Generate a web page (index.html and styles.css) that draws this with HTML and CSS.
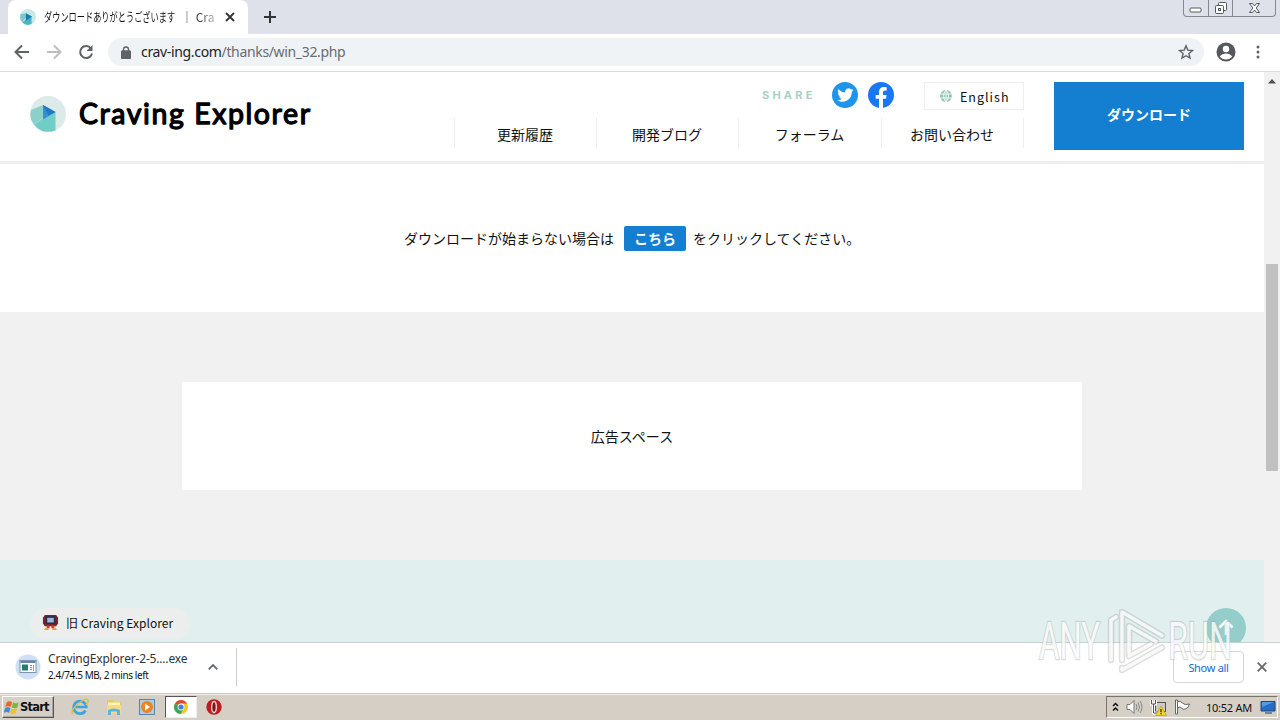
FILE: index.html
```html
<!DOCTYPE html>
<html lang="ja">
<head>
  <meta charset="UTF-8">
  <meta name="viewport" content="width=device-width, initial-scale=1.0">
  <title>ダウンロードありがとうございます | Craving Explorer</title>
  <link rel="stylesheet" href="styles.css">
</head>
<body>
  <div class="tab-strip">
    <div class="tab">
      <svg class="favicon" viewBox="0 0 36 36"><circle cx="18" cy="18" r="18" fill="#c9e9e9"/><path d="M2 11l11-1v9L5 30Q-3 20 2 11z" fill="#79c9cc"/><path d="M5 30L26 16v18Q13 39 5 30z" fill="#4fb5c5"/><path d="M13 9l14 8-14 10z" fill="#187fb5"/></svg>
      <span class="tab-title">ダウンロードありがとうございます</span>
      <span class="tab-rest">｜ Cra</span>
      <svg class="tab-close" viewBox="0 0 10 10"><path d="M1 1l8 8M9 1L1 9"/></svg>
    </div>
    <svg class="new-tab" viewBox="0 0 12 12"><path d="M6 0v12M0 6h12"/></svg>
    <div class="window-buttons">
      <span><svg width="13" height="6" viewBox="0 0 13 6"><rect x="1" y="1" width="11" height="4" rx="1"/></svg></span>
      <span><svg width="14" height="14" viewBox="0 0 14 14"><rect x="4.500" y="1.500" width="8" height="8" rx="1"/><rect x="1.500" y="4.500" width="8" height="8" rx="1"/><rect x="4.500" y="7.500" width="2" height="2"/></svg></span>
      <span><svg width="13" height="12" viewBox="0 0 13 12"><path d="M1.500 1.500h3l2 2.500 2-2.500h3L8.200 6l3.300 4.500h-3l-2-2.500-2 2.500h-3L4.800 6z"/></svg></span>
    </div>
  </div>

  <div class="toolbar">
    <svg class="nav-icon" viewBox="0 0 16 16"><path d="M15 8H2M8 1.500L1.500 8 8 14.500"/></svg>
    <svg class="nav-icon disabled" viewBox="0 0 16 16"><path d="M1 8h13M8 1.500L14.500 8 8 14.500"/></svg>
    <svg class="nav-icon" viewBox="0 0 16 16"><path d="M13 4.500A6 6 0 1 0 14 9.500"/><path d="M14.500 1v6h-6z" fill="#5f6368" stroke="none"/></svg>
    <div class="address">
      <svg class="lock" viewBox="0 0 10 13"><rect x="0.500" y="5" width="9" height="7.500" rx="1"/><path d="M2.500 5V3.500a2.500 2.500 0 0 1 5 0V5"/></svg>
      <span class="url">crav-ing.com<i>/thanks/win_32.php</i></span>
      <svg class="star" viewBox="0 0 16 16"><path d="M8 1.800l1.800 4.300 4.700.4-3.600 3 1.100 4.600L8 11.700 4 14.100l1.100-4.600-3.600-3 4.700-.4z"/></svg>
    </div>
    <svg class="avatar" viewBox="0 0 20 20"><circle cx="10" cy="10" r="9.500" fill="#55585d"/><circle cx="10" cy="7" r="3.200" fill="#fff"/><path d="M3.800 14.500Q6 11.500 10 11.500t6.200 3Q14 17.500 10 17.500t-6.200-3z" fill="#fff"/></svg>
    <svg class="kebab" viewBox="0 0 4 14"><circle cx="2" cy="2" r="1.500"/><circle cx="2" cy="7" r="1.500"/><circle cx="2" cy="12" r="1.500"/></svg>
  </div>

  <div class="viewport">
    <div class="page">
      <header class="site-header">
        <svg class="logo" viewBox="0 0 290 40">
          <circle cx="18" cy="18" r="18" fill="#dcebe8"/>
          <path d="M1 14l12-5v13L4 28.500Q-1 22 1 14z" fill="#8dcfcb"/>
          <path d="M4 28.500L13 22.500 25.500 16v18.500Q12 39 4 28.500z" fill="#72cdc6"/>
          <path d="M13 9l12.500 7L13 23.500z" fill="#2b93d5"/>
          <path d="M13 9l12.500 7-7 3.500z" fill="#2277c4"/>
          <text x="49" y="28" textLength="231" lengthAdjust="spacing">Craving Explorer</text>
        </svg>
        <div class="header-menu">
          <div class="share-row">
            <span class="share-label">SHARE</span>
            <svg class="social" viewBox="0 0 26 26"><circle cx="13" cy="13" r="13" fill="#1d95ed"/><path transform="translate(4.700 4.700) scale(.71)" fill="#fff" d="M23.600 4.600c-.8.400-1.700.6-2.700.8 1-.6 1.700-1.500 2.100-2.600-.9.500-1.900.9-3 1.100A4.700 4.700 0 0 0 12 8.200C8.100 8 4.600 6.100 2.300 3.300a4.700 4.700 0 0 0 1.500 6.300c-.8 0-1.500-.2-2.100-.6 0 2.300 1.600 4.200 3.800 4.700-.7.200-1.400.2-2.100.1.600 1.900 2.300 3.200 4.400 3.300A9.500 9.500 0 0 1 .8 19c2.100 1.300 4.600 2.100 7.200 2.100 8.700 0 13.700-7.400 13.300-14 .9-.7 1.700-1.500 2.300-2.500z"/></svg>
            <svg class="social" viewBox="0 0 26 26"><circle cx="13" cy="13" r="13" fill="#1877f2"/><path fill="#fff" d="M11 26v-9.200H7.700V13H11v-2.900c0-3.300 2-5.100 4.900-5.100 1.400 0 2.800.3 2.800.3v3.200h-1.600c-1.600 0-2.100 1-2.100 2V13h3.600l-.6 3.800h-3V26z"/></svg>
            <a class="language"><svg viewBox="0 0 12 12"><circle cx="6" cy="6" r="6" fill="#91c8b6"/><path d="M0 4h12M0 8h12M6 0v12M6 0Q1 6 6 12Q11 6 6 0" fill="none" stroke="#fff" stroke-width=".8"/></svg>English</a>
          </div>
          <nav class="main-nav">
            <a>更新履歴</a>
            <a>開発ブログ</a>
            <a>フォーラム</a>
            <a>お問い合わせ</a>
          </nav>
        </div>
        <a class="download-button">ダウンロード</a>
      </header>

      <section class="retry">
        <span>ダウンロードが始まらない場合は</span>
        <a class="retry-link">こちら</a>
        <span>をクリックしてください。</span>
      </section>

      <section class="ad-area">
        <div class="ad-space">広告スペース</div>
      </section>

      <footer class="site-footer">
        <a class="old-site">
          <svg viewBox="0 0 18 18"><path d="M3 1h12l2 3v6l-2 3H3l-2-3V4z" fill="#76242b"/><rect x="4" y="2.500" width="10" height="8" rx="1" fill="#242d50"/><rect x="5.500" y="4" width="7" height="5" fill="#9ab7de"/><path d="M5 12h3v3H5zM10 12h3v3h-3z" fill="#d33a25"/><path d="M2 17q1-3 4-2.500l1.500 2.500zM16 17q-1-3-4-2.500L10.500 17z" fill="#eda22b"/></svg>
          旧 Craving Explorer
        </a>
        <a class="to-top"><svg viewBox="0 0 18 18"><path d="M9 17V3M2.500 9.500L9 3l6.500 6.500"/></svg></a>
      </footer>
    </div>
    <div class="scrollbar">
      <svg viewBox="0 0 8 5"><path d="M0 4.500L4 0l4 4.500z"/></svg>
      <div class="thumb"></div>
    </div>
  </div>

  <div class="download-shelf">
    <div class="download-item">
      <svg class="file-icon" viewBox="0 0 26 26"><circle cx="13" cy="13" r="12.500" fill="#cfdff5"/><rect x="5" y="6.500" width="16" height="12" fill="#fff" stroke="#8292a5"/><path d="M5.500 8h15" stroke="#6487ad" stroke-width="2"/><rect x="7" y="10.500" width="6" height="6" fill="#287b70"/><path d="M15 11.500h2M15 13.500h2M15 15.500h2" stroke="#7e8992"/><path d="M18.500 11v6" stroke="#68b69d"/></svg>
      <div class="file-text">
        <span class="file-name">CravingExplorer-2-5....exe</span>
        <span class="file-status">2.4/74.5 MB, 2 mins left</span>
      </div>
      <svg class="chevron" viewBox="0 0 10 6"><path d="M.7 5.300L5 1l4.300 4.300"/></svg>
    </div>
    <button class="show-all">Show all</button>
    <svg class="shelf-close" viewBox="0 0 10 10"><path d="M.7.700l8.600 8.600M9.300.700L.7 9.300"/></svg>
  </div>

  <div class="taskbar">
    <div class="start">
      <svg viewBox="0 0 18 16"><path d="M3 2q3-2 6 0L7.500 7.300q-3-1.600-6 0z" fill="#e9672b"/><path d="M10 2.500q3 1.500 6.500 0L15 8q-3 1.500-6.300 0z" fill="#79b943"/><path d="M1.200 8.500q3-1.600 6 0L5.800 14q-3-1.800-6 0z" fill="#3e8ed4"/><path d="M8.400 9q3 1.600 6.300 0l-1.500 5.500q-3 1.600-6.300 0z" fill="#f5bd2d"/></svg>
      <span>Start</span>
    </div>
    <div class="launchers">
      <span class="launcher"><svg viewBox="0 0 18 18"><path d="M14.500 12.500A6.300 6.300 0 1 1 15.300 9H4.500" fill="none" stroke="#3ba5e0" stroke-width="2.700"/><path d="M2 16Q-1 13 7 6T17 2q1 2-2 5" fill="none" stroke="#e4bc43" stroke-width="1.400"/></svg></span>
      <span class="launcher"><svg viewBox="0 0 18 18"><path d="M2 2h6l1 2h7v11H2z" fill="#e8c95f"/><path d="M3 4.500h12v4H3z" fill="#fff3b5"/><path d="M2 7h14v8H2z" fill="#f3dc84"/><path d="M3 17v-5q6-3 12 0v5h-3v-3.500H6V17z" fill="#58b4e3"/></svg></span>
      <span class="launcher"><svg viewBox="0 0 18 18"><rect x="1.500" y="1.500" width="15" height="15" fill="#a9cdea" stroke="#5685b2"/><circle cx="9" cy="9" r="6" fill="#ed8422"/><path d="M7 5.500l5 3.500-5 3.500z" fill="#fff"/></svg></span>
      <span class="launcher active"><svg viewBox="0 0 18 18"><g transform="translate(1 1)"><circle cx="8" cy="8" r="7" fill="#f5c52b"/><path d="M8 8L2 4.400A7 7 0 0 1 14.100 4.600H8z" fill="#db493b"/><path d="M1.900 4.500A7 7 0 0 0 7.500 15L10.500 10 8 8z" fill="#3ba55c"/><circle cx="8" cy="8" r="3.400" fill="#fff"/><circle cx="8" cy="8" r="2.600" fill="#437fdc"/></g></svg></span>
      <span class="launcher"><svg viewBox="0 0 18 18"><circle cx="9" cy="9" r="7.700" fill="#be1d20"/><ellipse cx="9" cy="9" rx="2.300" ry="5.500" fill="#73191b" stroke="#f5dddd" stroke-width="1.300"/></svg></span>
    </div>
    <div class="tray">
      <svg width="7" height="11" viewBox="0 0 7 11"><path d="M1 4l2.500-2.500L6 4M1 8.500L3.500 6 6 8.500" fill="none" stroke="#111" stroke-width="1.500"/></svg>
      <svg width="17" height="16" viewBox="0 0 17 16"><path d="M1 5.500h3l4-4v13l-4-4H1z" fill="#fff" stroke="#777"/><path d="M10 5q2 3 0 6M12 3.500q3 4.500 0 9M14 2q4 6 0 12" fill="none" stroke="#888"/></svg>
      <svg width="17" height="17" viewBox="0 0 17 17"><rect x="5.500" y="3.500" width="10" height="9" fill="#cbcac6" stroke="#555"/><path d="M1.500 1v4h4V1M3.500 5v9h4" fill="none" stroke="#fff" stroke-width="3"/><path d="M1.500 1v4h4V1M3.500 5v9h4" fill="none" stroke="#555"/><path d="M11 7l5.500 9.500h-11z" fill="#f7d424" stroke="#af9618" stroke-width=".6"/><path d="M11 10v3.200M11 14v1.300" stroke="#222" stroke-width="1.200"/></svg>
      <svg width="17" height="16" viewBox="0 0 17 16"><path d="M1.500 1v14h2V1z" fill="#fff" stroke="#666"/><path d="M3.500 2.500q3-1 5 1.500t7 1q-1 4-4 5t-4-1-4 0z" fill="#fff" stroke="#666"/></svg>
      <span class="clock">10:52 AM</span>
      <svg width="16" height="14" viewBox="0 0 16 14"><path d="M1 1.500h14v9.500H1z" fill="#256ec4" stroke="#244677"/><path d="M2 2h12L2 7z" fill="#559ae2"/><path d="M5 13h7" stroke="#526d8a" stroke-width="1.500"/></svg>
    </div>
  </div>

  <svg class="watermark" viewBox="0 0 200 66">
    <text x="3" y="51" textLength="61" lengthAdjust="spacingAndGlyphs">ANY</text>
    <text x="132" y="51" textLength="64" lengthAdjust="spacingAndGlyphs">RUN</text>
    <g class="mark-shadow">
      <path d="M80 9l-5 3v40M86 52V4l40 23.500M93 45V18l27 15.500M86 60v2l40-22.500M93 48l22-12"/>
    </g>
    <g class="mark-line">
      <path d="M80 9l-5 3v40M86 52V4l40 23.500M93 45V18l27 15.500M86 60v2l40-22.500M93 48l22-12"/>
    </g>
  </svg>
</body>
</html>
```
FILE: styles.css
```css
* {
  box-sizing: border-box;
}

body {
  margin: 0;
  width: 1280px;
  height: 720px;
  overflow: hidden;
  display: flex;
  flex-direction: column;
  font-family: "Noto Sans CJK JP", sans-serif;
  color: #111;
  background: #fff;
}

svg {
  display: block;
  flex: none;
}

/* Browser chrome */
.tab-strip {
  height: 34px;
  flex: none;
  background: #dee1e9;
  display: flex;
  padding-left: 8px;
}

.tab {
  width: 240px;
  height: 34px;
  padding-left: 12px;
  background: #fff;
  border-radius: 8px 8px 0 0;
  display: flex;
  align-items: center;
  font-size: 12px;
  white-space: nowrap;
}

.favicon {
  width: 16px;
  height: 16px;
}

/* narrow kana, 192px squeezed to 131px */
.tab-title {
  width: 192px;
  margin: 0 -61px 0 8px;
  transform: scaleX(0.683);
  transform-origin: left;
  flex: none;
  line-height: 16px;
  margin-top: -1px;
}

.tab-rest {
  width: 38px;
  margin-left: 6px;
  margin-top: -1px;
  overflow: hidden;
  background: linear-gradient(90deg, #333 45%, #ddd);
  background-clip: text;
  color: transparent;
}

.tab-close {
  width: 10px;
  height: 10px;
  margin-left: 6px;
  fill: none;
  stroke: #333;
  stroke-width: 1.8;
}

.new-tab {
  width: 12px;
  height: 12px;
  margin: 11px 0 0 16px;
  fill: none;
  stroke: #333;
  stroke-width: 2;
}

.window-buttons {
  width: 93px;
  height: 17px;
  margin-left: auto;
  margin-right: 4px;
  border: 1px solid #858991;
  border-top: 0;
  border-radius: 0 0 4px 4px;
  display: flex;
}

.window-buttons span {
  width: 25px;
  display: flex;
  align-items: center;
  justify-content: center;
  border-right: 1px solid #858991;
}

.window-buttons span:first-child {
  align-items: flex-end;
  padding-bottom: 3px;
}

.window-buttons span:last-child {
  width: 42px;
  border-right: 0;
}

.window-buttons svg {
  fill: #fff;
  stroke: #555961;
}

.toolbar {
  height: 38px;
  flex: none;
  display: flex;
  align-items: center;
  padding-left: 14px;
  padding-bottom: 1px;
  border-bottom: 1px solid #dcdcdc;
}

.nav-icon {
  width: 16px;
  height: 16px;
  margin-right: 16px;
  fill: none;
  stroke: #5f6368;
  stroke-width: 2;
}

.nav-icon.disabled {
  stroke: #bbbdbf;
}

.nav-icon + .address {
  margin-left: -2px;
}

.address {
  width: 1096px;
  height: 28px;
  padding: 0 10px 0 13px;
  border-radius: 14px;
  background: #f0f3f5;
  display: flex;
  align-items: center;
}

.lock {
  width: 10px;
  height: 13px;
  fill: #5f6368;
  stroke: #5f6368;
  stroke-width: 1.3;
}

.lock path {
  fill: none;
}

.url {
  margin: -2px 0 0 10px;
  font: 14px "Noto Sans", sans-serif;
  letter-spacing: -0.34px;
  color: #202124;
}

.url i {
  font-style: normal;
  color: #686c71;
}

.star {
  width: 16px;
  height: 16px;
  margin-left: auto;
  fill: none;
  stroke: #5f6368;
  stroke-width: 1.4;
}

.avatar {
  width: 20px;
  height: 20px;
  margin-left: 12px;
}

.kebab {
  width: 4px;
  height: 14px;
  margin-left: 20px;
  fill: #5f6368;
}

/* Web page */
.viewport {
  height: 570px;
  flex: none;
  display: flex;
}

.page {
  width: 1264px;
}

.site-header {
  height: 92px;
  padding: 10px 20px 0 30px;
  border-bottom: 3px solid #efefef;
  display: flex;
}

.logo {
  width: 290px;
  height: 40px;
  margin-top: 14px;
}

.logo text {
  font: 400 28.5px Lato, sans-serif;
  stroke: #000;
  stroke-width: 1.3px;
  stroke-linejoin: round;
}

.header-menu {
  width: 570px;
  margin-left: 134px;
}

.share-row {
  height: 28px;
  display: flex;
  justify-content: flex-end;
}

.share-label {
  width: 70px;
  color: #a8d1c3;
  font: bold 11px/26px Inter, sans-serif;
  letter-spacing: 3.2px;
}

.social {
  width: 26px;
  height: 26px;
  margin-right: 10px;
}

.language {
  width: 100px;
  height: 28px;
  margin-left: 20px;
  border: 1px solid #eee;
  display: flex;
  align-items: center;
  padding-left: 15px;
  font-size: 12.5px;
  letter-spacing: 1px;
}

.language svg {
  width: 12px;
  height: 12px;
  margin-right: 8px;
}

.main-nav {
  height: 30px;
  margin-top: 8px;
  display: grid;
  grid-template-columns: 142px 142px 143px 142px;
  grid-template-rows: 30px;
  border-left: 1px solid #eee;
}

.main-nav a {
  padding-right: 1px;
  border-right: 1px solid #eee;
  text-align: center;
  font-size: 14px;
  line-height: 32px;
}

.download-button {
  width: 190px;
  height: 68px;
  margin-left: 30px;
  background: #147fd0;
  color: #fff;
  text-align: center;
  font-size: 14px;
  font-weight: bold;
  line-height: 65px;
}

.retry {
  height: 148px;
  display: flex;
  align-items: center;
  padding-left: 404px;
  font-size: 14px;
}

.retry-link {
  width: 62px;
  height: 25px;
  margin: 0 7px 0 10px;
  border-radius: 2px;
  background: #147fd0;
  color: #fff;
  font-weight: bold;
  line-height: 25px;
  text-align: center;
}

.ad-area {
  height: 248px;
  background: #f1f1f1;
  display: flex;
  align-items: center;
  justify-content: center;
}

.ad-space {
  width: 900px;
  height: 108px;
  background: #fff;
  font-size: 14px;
  line-height: 108px;
  text-align: center;
}

.site-footer {
  height: 82px;
  background: #e1efee;
  padding: 48px 18px 0 30px;
  display: flex;
  justify-content: space-between;
}

.old-site {
  width: 160px;
  height: 31px;
  border-radius: 16px;
  background: #ebeeed;
  display: flex;
  align-items: center;
  padding: 0 0 2px 12px;
  font-size: 12px;
  letter-spacing: 0.05px;
  white-space: nowrap;
}

.old-site svg {
  width: 17px;
  height: 17px;
  margin-right: 7px;
}

.to-top {
  width: 40px;
  height: 40px;
  border-radius: 50%;
  background: #95cdcb;
  padding: 10px 11px;
}

.to-top svg {
  width: 18px;
  height: 18px;
  fill: none;
  stroke: #fff;
  stroke-width: 2.5;
}

.scrollbar {
  width: 16px;
  background: #f1f1f1;
  display: flex;
  flex-direction: column;
  align-items: center;
  padding-top: 7px;
}

.scrollbar svg {
  width: 8px;
  height: 5px;
  fill: #505050;
}

.thumb {
  width: 12px;
  height: 207px;
  margin-top: 180px;
  background: #c1c1c1;
}

/* Downloads */
.download-shelf {
  height: 51px;
  flex: none;
  padding-bottom: 2px;
  background: #fff;
  border-top: 1px solid #c9d2d1;
  display: flex;
  align-items: center;
  font-family: "Noto Sans", sans-serif;
  /* keeps the bar above the round button that runs past the page edge */
  z-index: 1;
}

.download-item {
  width: 237px;
  height: 38px;
  border-right: 1px solid #ccc;
  display: flex;
  align-items: center;
  padding-left: 15px;
}

.file-icon {
  width: 26px;
  height: 26px;
}

.file-text {
  width: 150px;
  margin-left: 7px;
  display: flex;
  flex-direction: column;
  white-space: nowrap;
}

.file-name {
  font-size: 12px;
  line-height: 16px;
  letter-spacing: -0.18px;
  color: #333;
}

.file-status {
  font-size: 10px;
  line-height: 16px;
  letter-spacing: -0.4px;
}

.chevron {
  width: 10px;
  height: 6px;
  margin-left: 10px;
}

.chevron,
.shelf-close {
  fill: none;
  stroke: #666a6e;
  stroke-width: 1.8;
}

.show-all {
  width: 71px;
  height: 32px;
  margin-left: auto;
  padding: 0;
  border: 1px solid #d4d6d9;
  border-radius: 4px;
  background: #fff;
  color: #1967d2;
  font: 11px "Noto Sans", sans-serif;
  letter-spacing: -0.3px;
}

.shelf-close {
  width: 10px;
  height: 10px;
  margin: 0 13px;
}

/* Windows taskbar */
.taskbar {
  height: 27px;
  flex: none;
  background: #d5cfc6;
  border-top: 1px solid #c9c5be;
  box-shadow: inset 0 1px #f2efea;
  display: flex;
  align-items: center;
}

.start {
  width: 52px;
  height: 22px;
  margin-left: 2px;
  padding-left: 1px;
  border: 1px solid;
  border-color: #fff #555 #555 #fff;
  box-shadow: inset -1px -1px #aaa59e;
  display: flex;
  align-items: center;
  font: bold 11.5px "DejaVu Sans", sans-serif;
  letter-spacing: -0.8px;
}

.start svg {
  width: 16px;
  height: 15px;
}

.launchers {
  margin-left: 10px;
  display: flex;
  gap: 1.6px;
}

.launcher {
  width: 32px;
  height: 22px;
  display: flex;
  align-items: center;
  justify-content: center;
}

.launcher svg {
  width: 18px;
  height: 18px;
}

.launcher.active {
  background: #fff;
  border: 1px solid;
  border-color: #555 #eee #eee #555;
}

.tray {
  width: 172px;
  height: 22px;
  margin-left: auto;
  margin-right: 2px;
  padding-left: 5px;
  border: 1px solid;
  border-color: #77736d #fff #fff #77736d;
  display: flex;
  align-items: center;
  gap: 7px;
}

.clock {
  width: 47px;
  margin-left: 8px;
  font: 11px "Noto Sans", sans-serif;
  letter-spacing: -0.25px;
  white-space: nowrap;
}

/* Floats over the page and the downloads bar */
.watermark {
  position: absolute;
  z-index: 2;
  left: 1036px;
  top: 608px;
  width: 200px;
  height: 66px;
}

.watermark text {
  font: 52px Roboto, sans-serif;
  fill: #fff;
  fill-opacity: 0.8;
  stroke: #a0a6a6;
  stroke-opacity: 0.4;
  stroke-width: 2.5;
  paint-order: stroke;
}

.mark-shadow {
  fill: none;
  stroke: #a0a6a6;
  stroke-width: 6.5;
  stroke-linejoin: round;
  stroke-linecap: round;
  opacity: 0.35;
}

.mark-line {
  fill: none;
  stroke: #fff;
  stroke-width: 3.5;
  stroke-linejoin: round;
  stroke-linecap: round;
  opacity: 0.8;
}
```
